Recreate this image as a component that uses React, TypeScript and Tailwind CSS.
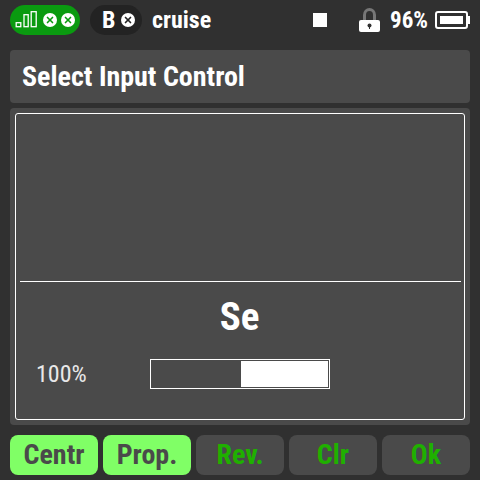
import { X } from "lucide-react"

const XBadge = ({ dark }: { dark: string }) => (
  <span className="w-[14px] h-[14px] rounded-full bg-white flex items-center justify-center">
    <X size={10} strokeWidth={4} color={dark} />
  </span>
)

const buttons = [
  { label: "Centr", on: true },
  { label: "Prop.", on: true },
  { label: "Rev.", on: false },
  { label: "Clr", on: false },
  { label: "Ok", on: false },
]

const App = () => {
  return (
    <div className="w-[480px] h-[480px] bg-[#303030] flex flex-col px-[10px] overflow-hidden font-['Roboto',sans-serif] [font-stretch:75%]">
      {/* top bar */}
      <div className="h-[50px] pb-[10px] flex items-center text-white">
        <div className="w-[70px] h-[30px] rounded-full bg-[#0a9a10] flex items-center pl-[5px] gap-[4px]">
          <svg width="23" height="18" viewBox="0 0 23 18" fill="none" stroke="#fff" strokeWidth="1.3" className="mr-[1px] mt-[-1px]">
            <rect x="1.2" y="11.7" width="4.6" height="4" />
            <rect x="9" y="3.7" width="4.2" height="12" />
            <rect x="16.2" y="0.7" width="5" height="15" />
          </svg>
          <XBadge dark="#0a9a10" />
          <XBadge dark="#0a9a10" />
        </div>
        <div className="ml-[10px] w-[52px] h-[30px] rounded-full bg-[#232323] flex items-center pl-[12px] gap-[6px]">
          <span className="text-[24px] font-bold leading-none">B</span>
          <XBadge dark="#232323" />
        </div>
        <span className="ml-[10px] text-[24px] font-bold leading-none">cruise</span>
        <div className="ml-auto flex items-center">
          <span className="w-[14px] h-[14px] bg-white mr-[32px]" />
          <svg width="21" height="26" viewBox="0 0 21 26" className="mr-[10px]">
            <path d="M4 14V8a6.5 7 0 0 1 13 0v6h-3V8a3.5 4 0 0 0-7 0v6z" fill="#777" />
            <rect x="0" y="13" width="21" height="12" rx="2" fill="#fff" />
            <circle cx="10.5" cy="18.5" r="2" fill="#303030" />
            <rect x="10" y="19" width="1" height="3" fill="#303030" />
          </svg>
          <span className="text-[23px] font-bold leading-none mr-[7px]">96%</span>
          <svg width="35" height="18" viewBox="0 0 35 18" fill="none">
            <rect x="1" y="1" width="31" height="16" rx="2" stroke="#fff" strokeWidth="2" />
            <rect x="5" y="5" width="23" height="8" fill="#fff" />
            <rect x="32" y="5" width="3" height="8" fill="#fff" />
          </svg>
        </div>
      </div>

      {/* title */}
      <div className="h-[53px] rounded-[4px] bg-[#4a4a4a] flex items-center px-3 text-white text-[28px] font-bold">
        Select Input Control
      </div>

      {/* panel */}
      <div className="mt-[5px] h-[317px] rounded-[4px] bg-[#4a4a4a] p-[5px]">
        <div className="h-full rounded-[3px] border border-white flex flex-col pl-1 pr-[3px]">
          <div className="h-[168px] border-b border-white" />
          <div className="mt-[13px] pr-[2px] text-center text-white text-[39px] font-bold leading-[44px]">Se</div>
          <div className="mt-[20px] flex items-center">
            <span className="ml-4 w-[114px] text-[24px] leading-[28px] text-[#e8e8e8]">100%</span>
            <div className="w-[180px] h-[30px] border border-white flex p-[1px]">
              <div className="w-[90px] border-r border-white" />
              <div className="flex-1 bg-white" />
            </div>
          </div>
        </div>
      </div>

      {/* buttons */}
      <div className="mt-[10px] flex gap-[5px]">
        {buttons.map((b) => (
          <div
            key={b.label}
            className={
              b.on
                ? "w-[88px] h-[40px] rounded-[8px] bg-[#80ff66] flex items-center justify-center text-[#4a4a4a] text-[28px] font-bold"
                : "w-[88px] h-[40px] rounded-[8px] bg-[#4a4a4a] flex items-center justify-center text-[#1fb000] text-[28px] font-bold"
            }
          >
            {b.label}
          </div>
        ))}
      </div>
    </div>
  )
}

export default App
